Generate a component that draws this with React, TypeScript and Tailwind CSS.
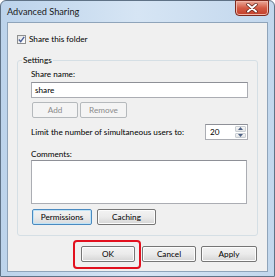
import React from "react";

const font = { fontFamily: 'Lato, "Noto Sans", sans-serif' };

function Btn({
  children,
  className = "",
  disabled = false,
  focused = false,
}: {
  children: React.ReactNode;
  className?: string;
  disabled?: boolean;
  focused?: boolean;
}) {
  const look = disabled
    ? "border-[#b5b9bc] bg-[#f4f4f4] text-[#8b8b8b]"
    : focused
    ? "border-[#4a8ac0] bg-gradient-to-b from-[#f2f2f2] via-[#ebebeb] to-[#d8dbde] text-black shadow-[inset_0_0_0_1px_#bfe3f7]"
    : "border-[#767676] bg-gradient-to-b from-[#f3f3f3] via-[#ebebeb] to-[#d5d5d5] text-black shadow-[inset_0_0_0_1px_#fcfcfc]";
  return (
    <div
      className={`flex h-[16px] items-center justify-center whitespace-nowrap rounded-[2px] border text-[8.2px] leading-none ${look} ${className}`}
    >
      {children}
    </div>
  );
}

export default function App() {
  return (
    <div
      className="h-[277px] w-[275px] overflow-hidden bg-white text-black"
      style={font}
    >
      <div className="relative flex h-[277px] w-[275px] flex-col rounded-t-[6px] border border-[#5f7286] bg-gradient-to-r from-[#bcd3eb] via-[#d6e5f4] to-[#c2d7ed]">
        {/* title bar */}
        <div className="flex h-[21px] items-center pl-[6px] text-[9.2px] text-[#1a1a1a]">
          Advanced Sharing
        </div>
        <div className="absolute right-[5px] top-[-1px] flex h-[16px] w-[34px] items-center justify-center rounded-b-[4px] border border-[#7d2a1e] bg-gradient-to-b from-[#eaa99a] via-[#d35a44] to-[#c23d29] shadow-[inset_0_0_0_1px_#f0b4a6]">
          <svg width="12" height="10" viewBox="0 0 12 10">
            <path d="M2 1.5 L10 8.5 M10 1.5 L2 8.5" stroke="#5a2018" strokeWidth="3.4" strokeLinecap="round" />
            <path d="M2 1.5 L10 8.5 M10 1.5 L2 8.5" stroke="#ffffff" strokeWidth="2" strokeLinecap="round" />
          </svg>
        </div>

        {/* client area */}
        <div className="ml-[6px] flex h-[250px] w-[261px] flex-col border border-[#8fa4ba] bg-[#f0f0f0] text-[8.2px]">
          <div className="ml-[9px] mt-[11px] flex h-[11px] items-center gap-[3px]">
            <div className="flex h-[9px] w-[9px] items-center justify-center border border-[#8e8f8f] bg-gradient-to-br from-[#e4e4e4] to-[#ffffff]">
              <svg width="7" height="7" viewBox="0 0 7 7">
                <path d="M0.8 3.6 L2.7 5.6 L6.2 0.8" stroke="#4a5f97" strokeWidth="1.4" fill="none" />
              </svg>
            </div>
            <span>Share this folder</span>
          </div>

          {/* settings group */}
          <div className="relative ml-[9px] mt-[15px] flex h-[176px] w-[241px] flex-col rounded-[3px] border border-[#d5dfe5]">
            <span className="absolute left-[4px] top-[-7px] bg-[#f0f0f0] px-[1px] leading-[12px]">
              Settings
            </span>
            <div className="ml-[13px] mt-[7px] leading-[12px]">Share name:</div>
            <div className="ml-[13px] mt-[2px] flex h-[16px] w-[217px] items-center border border-[#abadb3] border-t-[#8e9097] bg-white pl-[3px]">
              share
            </div>
            <div className="ml-[14px] mt-[4px] flex gap-[2px]">
              <Btn disabled className="w-[46px]">Add</Btn>
              <Btn disabled className="w-[47px]">Remove</Btn>
            </div>
            <div className="ml-[13px] mt-[6px] flex h-[16px] w-[217px] items-center justify-between">
              <span className="whitespace-nowrap">Limit the number of simultaneous users to:</span>
              <div className="flex h-[16px] w-[43px] border border-[#abadb3] border-t-[#8e9097] bg-white">
                <div className="flex flex-1 items-center pl-[4px]">20</div>
                <div className="flex w-[13px] flex-col gap-[1px] p-[1px]">
                  <div className="flex flex-1 items-center justify-center rounded-[1px] border border-[#c9ced3] bg-gradient-to-b from-[#f6f6f6] to-[#e2e4e6]">
                    <svg width="5" height="3" viewBox="0 0 5 3">
                      <path d="M0 3 L2.5 0 L5 3 Z" fill="#4d6185" />
                    </svg>
                  </div>
                  <div className="flex flex-1 items-center justify-center rounded-[1px] border border-[#c9ced3] bg-gradient-to-b from-[#f6f6f6] to-[#e2e4e6]">
                    <svg width="5" height="3" viewBox="0 0 5 3">
                      <path d="M0 0 L2.5 3 L5 0 Z" fill="#4d6185" />
                    </svg>
                  </div>
                </div>
              </div>
            </div>
            <div className="ml-[13px] mt-[8px] leading-[12px]">Comments:</div>
            <div className="ml-[13px] h-[44px] w-[216px] border border-[#abadb3] border-t-[#8e9097] bg-white" />
            <div className="ml-[14px] mt-[5px] flex gap-[5px]">
              <Btn focused className="w-[60px]">Permissions</Btn>
              <Btn className="w-[59px]">Caching</Btn>
            </div>
          </div>

          {/* dialog buttons */}
          <div className="mr-[10px] mt-[10px] flex justify-end">
            <div className="relative">
              <Btn className="w-[54px]">OK</Btn>
              <div className="absolute bottom-[-7px] left-[-8px] right-[-6px] top-[-6px] rounded-[4px] border-2 border-[#e2101e]" />
            </div>
            <Btn className="ml-[7px] w-[54px]">Cancel</Btn>
            <Btn className="ml-[5px] w-[56px]">Apply</Btn>
          </div>
        </div>
      </div>
    </div>
  );
}
